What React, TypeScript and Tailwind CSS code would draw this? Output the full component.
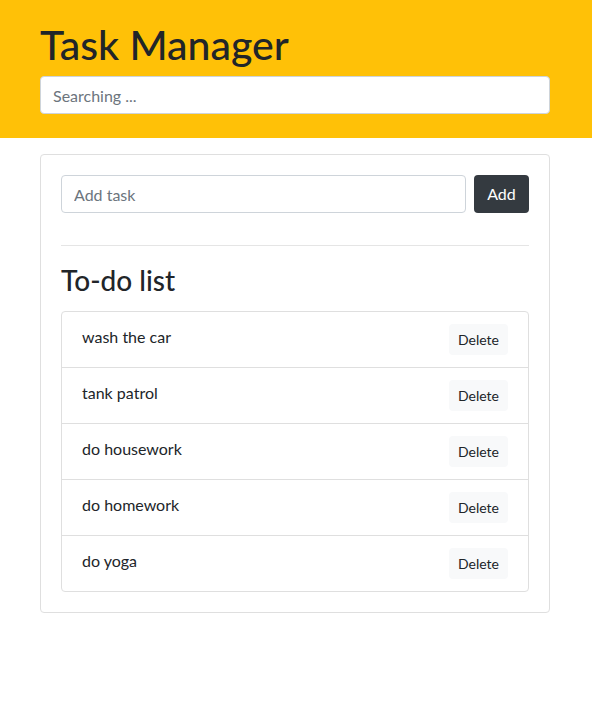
import React, { useState } from "react";

interface Task {
	id: number;
	title: string;
}

const initialTasks: Task[] = [
	{ id: 1, title: "wash the car" },
	{ id: 2, title: "tank patrol" },
	{ id: 3, title: "do housework" },
	{ id: 4, title: "do homework" },
	{ id: 5, title: "do yoga" },
];

const App: React.FC = () => {
	const [tasks, setTasks] = useState<Task[]>(initialTasks);
	const [query, setQuery] = useState<string>("");
	const [draft, setDraft] = useState<string>("");

	const addTask = () => {
		if (!draft.trim()) return;
		setTasks((prev) => [...prev, { id: Date.now(), title: draft.trim() }]);
		setDraft("");
	};

	const visible = tasks.filter((t) => t.title.toLowerCase().includes(query.toLowerCase()));

	return (
		<div className="min-h-screen bg-white text-[#212529] [font-family:Lato,'Noto_Sans',sans-serif]">
			<header className="bg-[#ffc107] pl-10 pr-[42px] pt-[19px] pb-6">
				<h1 className="text-[41px] leading-[52px] font-medium mb-[5px]">Task Manager</h1>
				<input
					value={query}
					onChange={(e) => setQuery(e.target.value)}
					placeholder="Searching ..."
					className="w-full h-[38px] rounded border border-[#ced4da] bg-white px-3 text-base text-[#212529] placeholder:text-[#6c757d] outline-none"
				/>
			</header>

			<main className="pl-10 pr-[42px] pt-4">
				<div className="rounded border border-[#dfdfdf] p-5">
					<div className="flex gap-2">
						<input
							value={draft}
							onChange={(e) => setDraft(e.target.value)}
							placeholder="Add task"
							className="flex-1 h-[38px] rounded border border-[#ced4da] px-3 text-base placeholder:text-[#6c757d] outline-none"
						/>
						<button
							onClick={addTask}
							className="h-[38px] w-[55px] rounded bg-[#343a40] text-base text-white"
						>
							Add
						</button>
					</div>

					<hr className="mt-8 mb-[17px] border-t border-[#e5e5e5]" />

					<h3 className="text-[28px] leading-[34px] font-medium mb-[14px]">To-do list</h3>

					<ul className="rounded border border-[#dfdfdf]">
						{visible.map((task, i) => (
							<li
								key={task.id}
								className={`flex items-start justify-between px-5 py-3 ${
									i > 0 ? "border-t border-[#dfdfdf]" : ""
								}`}
							>
								<span className="text-base leading-6 pt-[1px]">{task.title}</span>
								<button
									onClick={() => setTasks((prev) => prev.filter((t) => t.id !== task.id))}
									className="h-[31px] w-[59px] rounded bg-[#f8f9fa] text-sm text-[#212529]"
								>
									Delete
								</button>
							</li>
						))}
					</ul>
				</div>
			</main>
		</div>
	);
};

export default App;
